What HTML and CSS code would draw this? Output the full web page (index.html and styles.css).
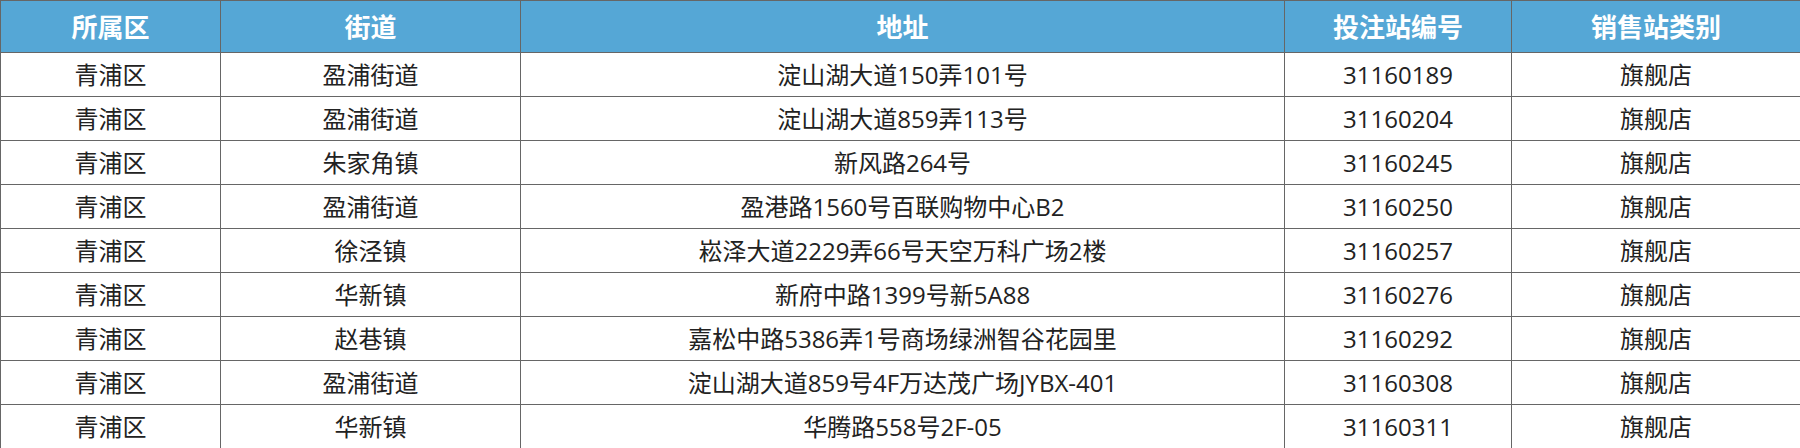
FILE: index.html
```html
<!DOCTYPE html>
<html lang="zh-CN">
<head>
<meta charset="utf-8">
<title>销售站列表</title>
<link rel="stylesheet" href="styles.css">
</head>
<body>
<table class="sites">
  <colgroup>
    <col class="c-district">
    <col class="c-street">
    <col class="c-address">
    <col class="c-code">
    <col class="c-type">
  </colgroup>
  <thead>
    <tr><th>所属区</th><th>街道</th><th>地址</th><th>投注站编号</th><th>销售站类别</th></tr>
  </thead>
  <tbody>
    <tr><td>青浦区</td><td>盈浦街道</td><td>淀山湖大道150弄101号</td><td>31160189</td><td>旗舰店</td></tr>
    <tr><td>青浦区</td><td>盈浦街道</td><td>淀山湖大道859弄113号</td><td>31160204</td><td>旗舰店</td></tr>
    <tr><td>青浦区</td><td>朱家角镇</td><td>新风路264号</td><td>31160245</td><td>旗舰店</td></tr>
    <tr><td>青浦区</td><td>盈浦街道</td><td>盈港路1560号百联购物中心B2</td><td>31160250</td><td>旗舰店</td></tr>
    <tr><td>青浦区</td><td>徐泾镇</td><td>崧泽大道2229弄66号天空万科广场2楼</td><td>31160257</td><td>旗舰店</td></tr>
    <tr><td>青浦区</td><td>华新镇</td><td>新府中路1399号新5A88</td><td>31160276</td><td>旗舰店</td></tr>
    <tr><td>青浦区</td><td>赵巷镇</td><td>嘉松中路5386弄1号商场绿洲智谷花园里</td><td>31160292</td><td>旗舰店</td></tr>
    <tr><td>青浦区</td><td>盈浦街道</td><td>淀山湖大道859号4F万达茂广场JYBX-401</td><td>31160308</td><td>旗舰店</td></tr>
    <tr><td>青浦区</td><td>华新镇</td><td>华腾路558号2F-05</td><td>31160311</td><td>旗舰店</td></tr>
  </tbody>
</table>
</body>
</html>
```

FILE: styles.css
```css
html, body {
  margin: 0;
  padding: 0;
  background: #ffffff;
}

.sites {
  width: 1800px;
  border-collapse: collapse;
  table-layout: fixed;
  font-family: "Open Sans", "Noto Sans CJK SC", sans-serif;
}

.c-district { width: 220px; }
.c-street { width: 300px; }
.c-address { width: 764px; }
.c-code { width: 227px; }
.c-type { width: 289px; }

.sites th,
.sites td {
  border: 1px solid #666666;
  padding: 0;
  text-align: center;
  vertical-align: middle;
  white-space: nowrap;
}

.sites th {
  height: 51px;
  background: #55a7d6;
  color: #ffffff;
  font-size: 26px;
  font-weight: 700;
  line-height: 1;
}

.sites td {
  height: 43px;
  color: #222222;
  font-size: 24px;
  line-height: 1;
}
```
